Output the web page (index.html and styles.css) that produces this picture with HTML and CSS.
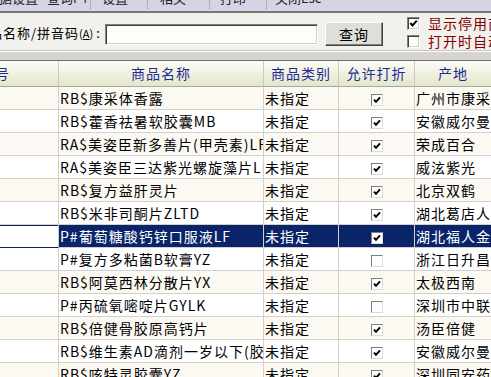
FILE: index.html
```html
<!DOCTYPE html>
<html>
<head>
    <meta charset="utf-8">
    <title>商品查询</title>
    <link rel="stylesheet" href="styles.css">
</head>
<body>

<div class="menubar">
    <div class="menu-items">
        <span class="mi">数据设置</span>
        <span class="mi">查询F4</span>
        <span class="sep"></span>
        <span class="mi">设置</span>
        <span class="sep"></span>
        <span class="mi">相关</span>
        <span class="sep"></span>
        <span class="mi">打印</span>
        <span class="sep"></span>
        <span class="mi">关闭Esc</span>
    </div>
</div>

<div class="searchbar">
    <label class="search-label">品名称/拼音码<span class="hot">(<u>A</u>)</span><span class="colon">:</span></label>
    <input class="search-input" type="text">
    <button class="btn">查询</button>
    <div class="options">
        <div class="opt">
            <span class="cb"><svg width="9" height="9" viewBox="0 0 9 9"><polyline points="1.3,4 3.5,6.4 7.8,1.6" fill="none" stroke="#000" stroke-width="2"/></svg></span>
            <span class="opt-text">显示停用商品</span>
        </div>
        <div class="opt">
            <span class="cb"></span>
            <span class="opt-text">打开时自动查询</span>
        </div>
    </div>
</div>

<div class="divider"></div>

<table class="grid">
    <thead>
        <tr>
            <th class="c1"><span class="head-clip">号</span></th>
            <th class="c2">商品名称</th>
            <th class="c3">商品类别</th>
            <th class="c4">允许打折</th>
            <th class="c5">产地</th>
        </tr>
    </thead>
    <tbody id="rows"></tbody>
</table>

<script type="text/javascript">
    var goods = [
        ["RB$康采体香露", true, "广州市康采"],
        ["RB$藿香祛暑软胶囊MB", true, "安徽威尔曼"],
        ["RA$美姿臣新多善片(甲壳素)LF", true, "荣成百合"],
        ["RA$美姿臣三达紫光螺旋藻片LF", true, "威泫紫光"],
        ["RB$复方益肝灵片", true, "北京双鹤"],
        ["RB$米非司酮片ZLTD", true, "湖北葛店人福"],
        ["P#葡萄糖酸钙锌口服液LF", true, "湖北福人金身"],
        ["P#复方多粘菌B软膏YZ", false, "浙江日升昌"],
        ["RB$阿莫西林分散片YX", true, "太极西南"],
        ["P#丙硫氧嘧啶片GYLK", false, "深圳市中联"],
        ["RB$倍健骨胶原高钙片", true, "汤臣倍健"],
        ["RB$维生素AD滴剂一岁以下(胶囊)", true, "安徽威尔曼"],
        ["RB$咳特灵胶囊YZ", true, "深圳同安药业"]
    ];
    var check = '<svg width="8" height="8" viewBox="0 0 8 8"><polyline points="1,3.6 3,5.8 7,1.4" fill="none" stroke="#000" stroke-width="2"/></svg>';
    var html = "";
    for (var i = 0; i < goods.length; i++) {
        var cls = (i % 2 == 0) ? "odd" : "even";
        if (i == 6) {
            cls = "sel";
        }
        html += '<tr class="' + cls + '">'
            + '<td class="first"></td>'
            + '<td>' + goods[i][0] + '</td>'
            + '<td>未指定</td>'
            + '<td class="ck"><span class="gcb">' + (goods[i][1] ? check : '') + '</span></td>'
            + '<td>' + goods[i][2] + '</td>'
            + '</tr>';
    }
    document.getElementById("rows").innerHTML = html;
</script>
</body>
</html>
```

FILE: styles.css
```css
html, body {
    margin: 0;
    overflow: hidden;
}

body {
    width: 491px;
    height: 377px;
    background: #ffffff;
    font-family: "Noto Sans CJK SC", sans-serif;
    font-size: 14px;
    letter-spacing: 1px;
    color: #000000;
}

/* top menu, only the lower half is visible */
.menubar {
    height: 11px;
    overflow: hidden;
    background: #d5d4e4;
    border-bottom: 2px solid #777777;
}

.menu-items {
    display: grid;
    grid-template-columns: 61px 43px 12px 45px 13px 49px 11px 46px 9px auto;
    margin-left: -14px;
    margin-top: -11px;
}

.mi {
    font-size: 13px;
    letter-spacing: 0;
    line-height: 18px;
    color: #222222;
    white-space: nowrap;
}

.sep {
    border-left: 1px dotted #8a8aa0;
    height: 20px;
}

/* search panel */
.searchbar {
    display: flex;
    align-items: flex-start;
    height: 37px;
    background: #f2f1ed;
    border-bottom: 1px solid #c4c4c4;
    white-space: nowrap;
}

.search-label {
    flex-shrink: 0;
    width: 116px;
    margin-left: -11px;
    margin-top: 10px;
    line-height: 20px;
    font-size: 13px;
}

.hot {
    font-size: 11px;
    letter-spacing: 0;
}

.colon {
    margin-left: 3px;
}

.search-input {
    flex-shrink: 0;
    box-sizing: border-box;
    width: 213px;
    height: 21px;
    margin: 11px 0 0 0;
    padding: 0;
    background: #fffdf8;
    border: 1px solid;
    border-color: #808080 #ffffff #ffffff #808080;
    box-shadow: inset 1px 1px 0 #404040, inset -1px -1px 0 #d4d0c8;
    outline: none;
}

.btn {
    flex-shrink: 0;
    box-sizing: border-box;
    width: 58px;
    height: 24px;
    margin: 9px 0 0 7px;
    padding: 0;
    background: #dfded9;
    border: 1px solid;
    border-color: #ffffff #404040 #404040 #ffffff;
    box-shadow: inset -1px -1px 0 #808080;
    font-family: "Noto Sans CJK SC", sans-serif;
    font-size: 14px;
    letter-spacing: 1px;
    color: #000000;
}

.options {
    margin: 4px 0 0 24px;
    display: flex;
    flex-direction: column;
    gap: 5px;
}

.opt {
    display: flex;
    align-items: center;
    height: 13px;
}

.cb {
    box-sizing: border-box;
    width: 13px;
    height: 13px;
    flex-shrink: 0;
    background: #ffffff;
    border: 1px solid;
    border-color: #808080 #ffffff #ffffff #808080;
    box-shadow: inset 1px 1px 0 #404040, inset -1px -1px 0 #d4d0c8;
    display: flex;
    align-items: center;
    justify-content: center;
}

.opt-text {
    margin-left: 8px;
    line-height: 13px;
    color: #800000;
}

.divider {
    height: 8px;
    background: #d6d4ce;
    border-top: 1px solid #ffffff;
}

/* data grid */
.grid {
    border-collapse: separate;
    border-spacing: 0;
    table-layout: fixed;
    width: 492px;
    border-top: 1px solid #6e6e6e;
}

.grid th {
    box-sizing: border-box;
    height: 26px;
    padding: 0;
    font-weight: normal;
    color: #1e2c98;
    background: linear-gradient(#fdfdf7, #e2e6c9);
    border-right: 1px solid #c9c9bd;
    border-bottom: 1px solid #a9a99f;
    white-space: nowrap;
    overflow: hidden;
    line-height: 25px;
}

.c1 { width: 59px; text-align: left; }
.c2 { width: 205px; }
.c3 { width: 75px; }
.c4 { width: 76px; }
.c5 { width: 77px; }

.head-clip {
    margin-left: -5px;
}

.grid td {
    box-sizing: border-box;
    height: 23px;
    padding: 0 0 0 1px;
    line-height: 22px;
    border-right: 1px solid #d4d0c8;
    border-bottom: 1px solid #d4d0c8;
    white-space: nowrap;
    overflow: hidden;
}

tr.odd td {
    background: #fbf9f2;
}

tr.even td {
    background: #ffffff;
}

tr.sel td {
    background: #0a246a;
    color: #ffffff;
}

tr.sel td.first {
    background: #ffffff;
    border-bottom-color: #0a246a;
    box-shadow: inset 0 1px 0 #0a246a;
}

.grid td.ck {
    text-align: center;
    padding: 0;
}

.gcb {
    box-sizing: border-box;
    display: inline-flex;
    align-items: center;
    justify-content: center;
    width: 12px;
    height: 12px;
    vertical-align: middle;
    background: #ffffff;
    border: 1px solid;
    border-color: #7f7f7f #dcdcdc #dcdcdc #7f7f7f;
}
```
